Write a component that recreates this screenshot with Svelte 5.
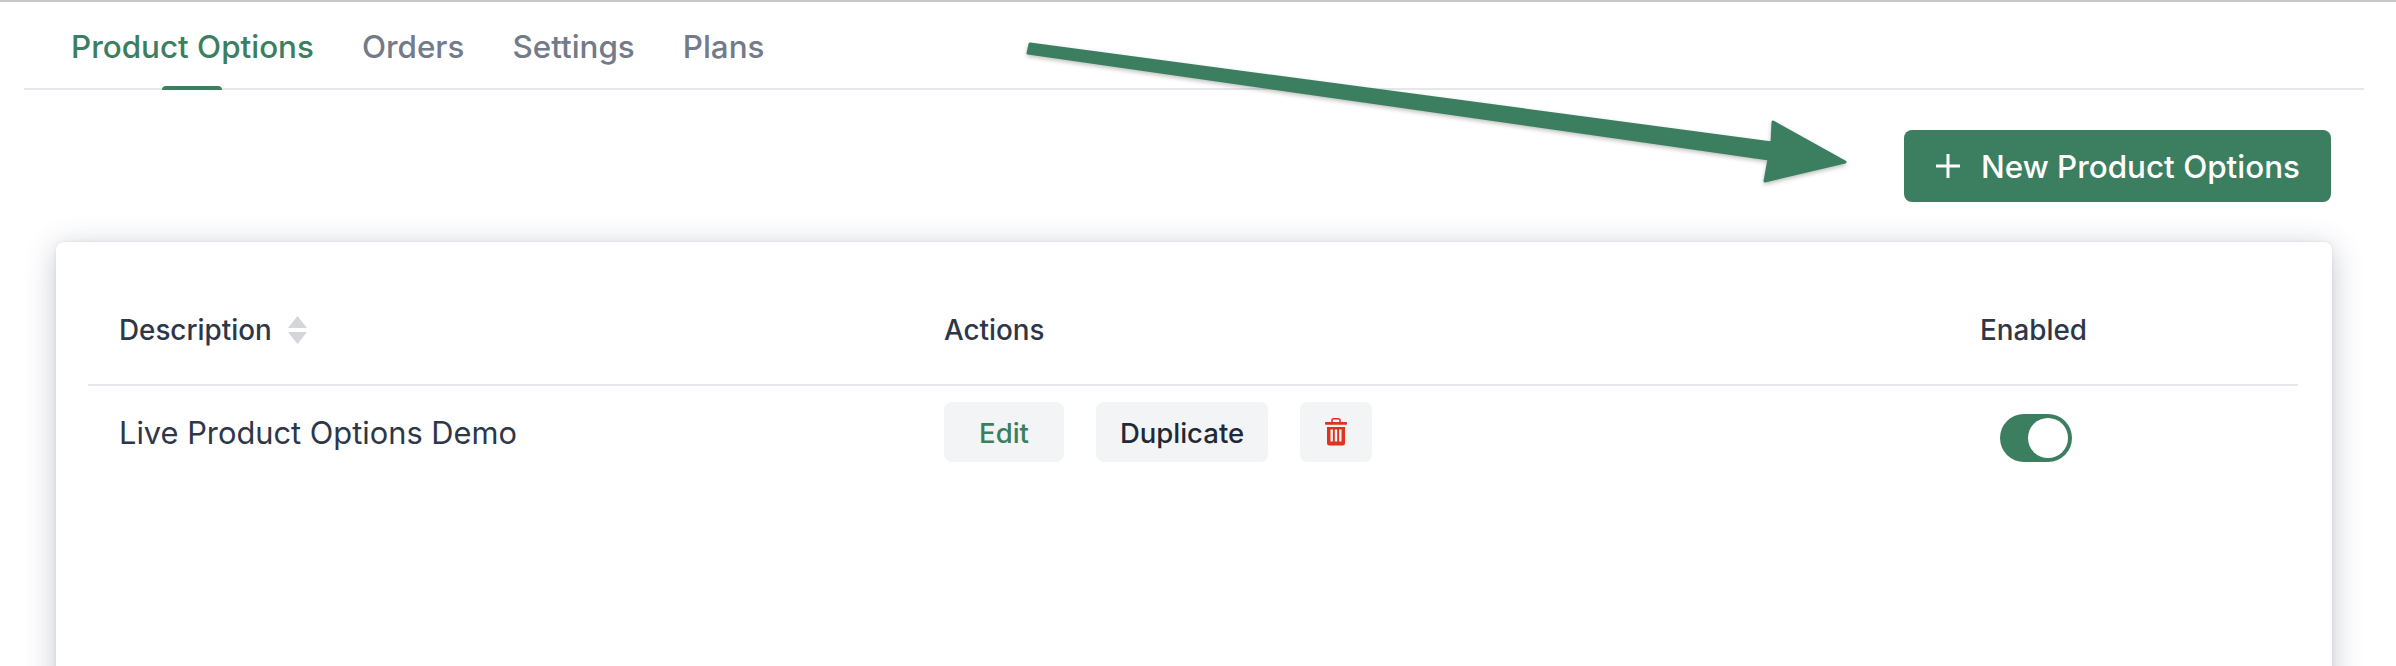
<script>
	const tabs = ['Product Options', 'Orders', 'Settings', 'Plans'];
	let active = 0;
	let enabled = true;
</script>

<div class="page">
	<nav class="tabs">
		{#each tabs as tab, i}
			<button class="tab" class:active={i === active} on:click={() => (active = i)}>{tab}</button>
		{/each}
	</nav>

	<div class="toolbar">
		<button class="primary">
			<svg class="plus" viewBox="0 0 26 26" width="26" height="26" aria-hidden="true">
				<path d="M13 1v24M1 13h24" stroke="#fff" stroke-width="3" fill="none" />
			</svg>
			<span class="label">New Product Options</span>
		</button>
	</div>

	<section class="card">
		<div class="grid head">
			<div class="cell first sortable">
				Description
				<svg class="sort" viewBox="0 0 19 28" width="19" height="28" aria-hidden="true">
					<path d="M9.5 0L19 12H0zM9.5 28L0 16h19z" fill="#d5d6db" />
				</svg>
			</div>
			<div class="cell">Actions</div>
			<div class="cell">Enabled</div>
		</div>
		<div class="grid row">
			<div class="cell first name">Live Product Options Demo</div>
			<div class="cell actions">
				<button class="btn edit">Edit</button>
				<button class="btn dup">Duplicate</button>
				<button class="btn trash" aria-label="Delete">
					<svg viewBox="0 0 22 28" width="22" height="28" aria-hidden="true">
						<path d="M7 4.5V2.3A1.5 1.5 0 0 1 8.5.8h5A1.5 1.5 0 0 1 15 2.3v2.2" fill="none" stroke="#e0321f" stroke-width="1.6" />
						<rect x="0" y="4" width="22" height="2.8" rx="0.8" fill="#e0321f" />
						<path
							fill-rule="evenodd"
							d="M2 9h18v16a2.5 2.5 0 0 1-2.5 2.5h-13A2.5 2.5 0 0 1 2 25zM5.5 11.5v12h2.4v-12zM9.8 11.5v12h2.4v-12zM14.1 11.5v12h2.4v-12z"
							fill="#e0321f"
						/>
					</svg>
				</button>
			</div>
			<div class="cell">
				<button class="toggle" class:on={enabled} aria-label="Enabled" on:click={() => (enabled = !enabled)}>
					<span class="knob"></span>
				</button>
			</div>
		</div>
	</section>

	<!-- annotation drawn over the screenshot -->
	<svg class="arrow" viewBox="0 0 2396 666" width="2396" height="666" aria-hidden="true">
		<path
			d="M1030 44L1772 143L1773 122L1845 162L1765 181L1769 159L1028 53Z"
			fill="#3c7e60"
			stroke="#3c7e60"
			stroke-width="3"
			stroke-linejoin="round"
		/>
	</svg>
</div>

<style>
	:global(body) {
		margin: 0;
		background: #fff;
	}

	.page {
		position: relative;
		height: 666px;
		overflow: hidden;
		border-top: 2px solid #c8c8cc;
		box-sizing: border-box;
		font-family: Inter, 'Liberation Sans', sans-serif;
		color: #2d3748;
	}

	button {
		font-family: inherit;
		border: none;
		cursor: pointer;
	}

	.tabs {
		display: flex;
		margin: 0 32px 0 24px;
		padding-left: 23px;
		height: 86px;
		border-bottom: 2px solid #e5e7eb;
	}

	.tab {
		position: relative;
		background: transparent;
		padding: 4px 24px 0;
		height: 86px;
		font-size: 31.4px;
		font-weight: 450;
		color: #737a89;
	}

	.tab.active {
		color: #3c7e60;
	}

	.tab.active::after {
		content: '';
		position: absolute;
		left: 50%;
		bottom: -2px;
		width: 60px;
		height: 4px;
		margin-left: -30px;
		background: #3c7e60;
		border-radius: 4px 4px 0 0;
	}

	.toolbar {
		display: flex;
		justify-content: flex-end;
		padding: 40px 65px 40px 0;
	}

	.primary {
		display: flex;
		align-items: center;
		gap: 20px;
		height: 72px;
		width: 427px;
		padding: 0 0 0 31px;
		background: #3c7e60;
		color: #fff;
		font-size: 31.4px;
		font-weight: 550;
		border-radius: 8px;
	}

	.label {
		padding-top: 2px;
	}

	.plus {
		flex: none;
	}

	.card {
		margin: 0 64px 0 56px;
		height: 600px;
		padding: 0 34px 0 32px;
		background: #fff;
		border-radius: 8px;
		box-shadow: 0 6px 30px rgba(60, 70, 100, 0.3), 0 0 3px rgba(60, 70, 100, 0.12);
	}

	.grid {
		display: grid;
		grid-template-columns: 824px 1036px 350px;
	}

	.head {
		height: 144px;
		padding-top: 34px;
		box-sizing: border-box;
		align-items: center;
		border-bottom: 2px solid #e5e7eb;
		font-size: 27.8px;
		font-weight: 450;
	}

	.cell {
		padding-left: 32px;
	}

	.first {
		padding-left: 31px;
	}

	.sortable {
		display: flex;
		align-items: center;
		gap: 16px;
	}

	.row {
		padding-top: 16px;
		align-items: start;
	}

	.name {
		font-size: 30.8px;
		line-height: 60px;
		padding-top: 1px;
	}

	.actions {
		display: flex;
		gap: 32px;
	}

	.btn {
		height: 60px;
		padding: 2px 0 0;
		background: #f3f4f6;
		color: #1f2937;
		font-size: 27.5px;
		font-weight: 450;
		border-radius: 8px;
	}

	.edit {
		color: #3c7e60;
		width: 120px;
	}

	.dup {
		width: 172px;
	}

	.trash {
		display: flex;
		align-items: center;
		justify-content: center;
		width: 72px;
		padding: 0;
	}

	.toggle {
		display: flex;
		align-items: center;
		justify-content: flex-end;
		margin: 12px 0 0 20px;
		width: 72px;
		height: 48px;
		padding: 0 4px;
		background: #d1d5db;
		border-radius: 24px;
	}

	.toggle.on {
		background: #3c7e60;
	}

	.knob {
		width: 40px;
		height: 40px;
		background: #fff;
		border-radius: 50%;
	}

	.arrow {
		position: absolute;
		left: 0;
		top: -2px;
		pointer-events: none;
		filter: drop-shadow(0 2px 2px rgba(0, 0, 0, 0.25));
	}
</style>
